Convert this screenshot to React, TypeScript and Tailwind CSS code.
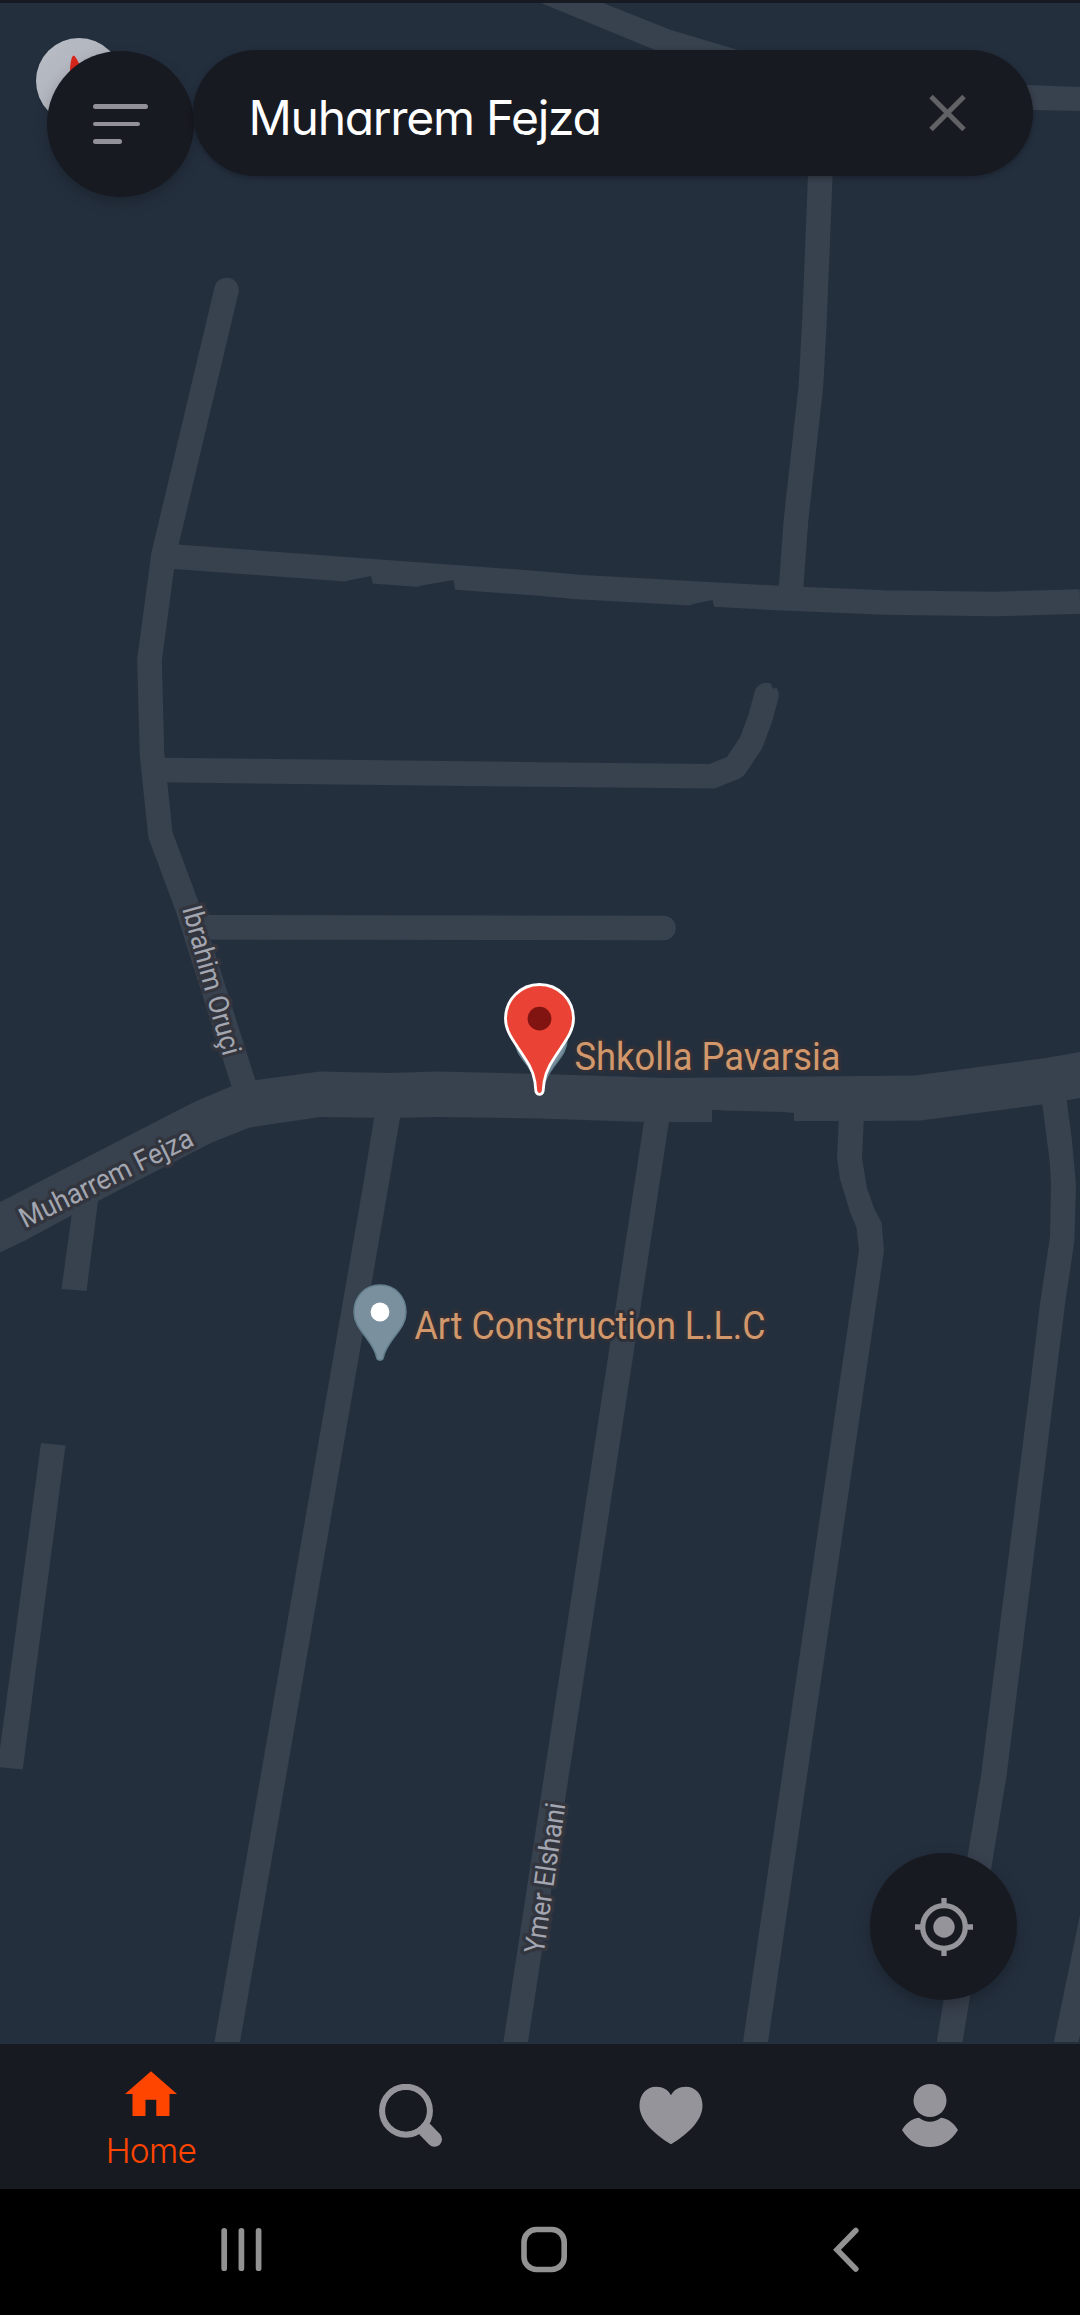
const pinPath =
  "M0-27C-15-27-26-15.500-26 0C-26 11-19.500 18-13.500 26C-7.500 34-4.500 39-3.300 45.500C-2.800 49 2.800 49 3.300 45.500C4.500 39 7.500 34 13.500 26C19.500 18 26 11 26 0C26-15.500 15-27 0-27Z";

function PlacePin({ x, y, hole }: { x: number; y: number; hole?: boolean }) {
  return (
    <g transform={`translate(${x} ${y})`}>
      <path d={pinPath} fill="#7b909e" stroke="#64808f" strokeWidth="1.500" />
      {hole && <circle r="9.400" fill="#fff" />}
    </g>
  );
}

function StreetMap() {
  return (
    <svg className="block h-full w-full" viewBox="0 3 1080 2041" preserveAspectRatio="none">
      <rect y="3" width="1080" height="2041" fill="#242f3e" />
      <g fill="#38414e">
        <path d="M541 3H603L671 30L738 50L760 58H675L655 50Z" />
        <path d="M1000 84L1027 85L1080 87V111L1034 110L1000 109Z" />
        <path d="M0 1202L194.600 1101.700L232 1086L256.500 1080L320 1071.400L389 1073L437 1071.400L540 1074L667 1078L915 1075.500L1046 1058L1080 1052V1098L1042 1104.500L920.500 1120.400L863.700 1121H794V1113L783 1112L721.500 1110.500V1110H712V1122H643L540 1118.500L437 1117L389 1118L320 1117L249.700 1127.400L212 1142.600L98 1201L26 1240L0 1252.400Z" />
        <path d="M73 1205L99 1195L98 1201L86.500 1291L61.500 1289Z" />
        <path d="M41 1443L65.500 1445.500L22.700 1769.500L-2.500 1767Z" />
        <path d="M375 1112L401 1112L389.500 1180L240 2042H214.500L364 1180Z" />
        <path d="M645 1115H670L528 2042H503.400Z" />
        <path d="M839 1115H864L862 1158L867 1188L874 1208L881.600 1222.500L884 1250.600L768 2042H743L859 1250.600L856.500 1227.500L850 1212L840 1179L837 1158Z" />
        <path d="M1041 1095H1066L1072 1141L1076 1185L1074.400 1241L1065 1304L1006.600 1775.600L962.500 2042H936.700L981 1775.600L1031 1379L1040 1304L1050 1237L1051 1182L1049.600 1160Z" />
        <path d="M1080 1915L1053.800 2042H1078.600L1080 2035Z" />
      </g>
      <g fill="none" stroke="#38414e" strokeWidth="24.600" strokeLinejoin="round">
        <path d="M226.500 290L163.500 555L149.500 660L152 755L160.500 835L188 909L244 1085" strokeLinecap="round" />
        <path d="M820.500 170L814.500 320L811 385L796 520L790.500 595" />
        <path d="M165 556L540 583.500L578 587L778 598L884 602.500L995 604L1080 601.500" />
        <path d="M160 770L540 774.500L712 776.300L735 767L751 743L760 719L766.500 695" strokeLinecap="round" />
        <path d="M196 927.300L663.500 928" strokeLinecap="round" />
      </g>
      <g fill="#242f3e">
        <path d="M346 581L371 576L373 584L346 584Z" />
        <path d="M419 586L453.500 580L455.500 591L419 589Z" />
        <path d="M691 604.500L712.500 600L714.500 608L691 607Z" />
        <path d="M771 680V684L773 689L776 687.500L782 690V680Z" />
      </g>

      <g
        fontFamily="Roboto, sans-serif"
        fontSize="28"
        fill="#a3a6b0"
        stroke="#32353d"
        strokeWidth="7"
        strokeLinejoin="round"
        paintOrder="stroke"
      >
        <text transform="translate(25 1228.500) rotate(-26.200)" textLength="190" lengthAdjust="spacingAndGlyphs">Muharrem Fejza</text>
        <text transform="translate(182 908.500) rotate(74.500)" textLength="154" lengthAdjust="spacingAndGlyphs">Ibrahim Oruçi</text>
        <text transform="translate(543.500 1954.500) rotate(-81.700)" textLength="152" lengthAdjust="spacingAndGlyphs">Ymer Elshani</text>
      </g>

      <PlacePin x={380} y={1312} hole />
      <PlacePin x={541} y={1039.500} />
      <g
        fontFamily="Roboto, sans-serif"
        fontSize="38"
        fill="#d2986b"
        stroke="#2f3037"
        strokeWidth="6"
        strokeLinejoin="round"
        paintOrder="stroke"
      >
        <text x="574.500" y="1070" textLength="266" lengthAdjust="spacingAndGlyphs">Shkolla Pavarsia</text>
        <text x="414.500" y="1339" textLength="351" lengthAdjust="spacingAndGlyphs">Art Construction L.L.C</text>
      </g>

      <g transform="translate(539.500 1018.700)">
        <path
          d="M0-34.200C-19-34.200-34-19-34 0C-34 11-28 19.500-21.500 29C-12 43-6.500 51-4.600 63C-4.200 67 -4 70-3.500 73C-2.500 76.500 2.500 76.500 3.500 73C4 70 4.200 67 4.600 63C6.500 51 12 43 21.500 29C28 19.500 34 11 34 0C34-19 19-34.200 0-34.200Z"
          fill="#ea4335"
          stroke="#fff"
          strokeWidth="2.800"
        />
        <circle r="11.900" fill="#811411" />
      </g>
    </svg>
  );
}

function Header() {
  return (
    <div className="absolute inset-x-0 top-0 flex items-start pt-[50px] pl-[47px]">
      <div className="absolute top-[38px] left-[36px] h-[86px] w-[86px] overflow-hidden rounded-full bg-gradient-to-br from-[#b9bdc5] to-[#a9acb4] shadow">
        <svg className="h-full w-full" viewBox="0 0 86 86">
          <path d="M34 34C34 26 35.500 18 37.500 17.500C40 18 42 24 46 31L40 44H34Z" fill="#d9261c" />
        </svg>
      </div>
      <button className="relative mt-px flex h-[146px] w-[147px] shrink-0 flex-col gap-[13px] rounded-full bg-[#181a21] pt-[53px] pl-[46px] shadow-[0_6px_14px_rgba(0,0,0,0.22)]">
        <span className="h-[4.700px] w-[55px] rounded-full bg-[#929197]" />
        <span className="h-[4.700px] w-[47px] rounded-full bg-[#929197]" />
        <span className="h-[4.700px] w-[29px] rounded-full bg-[#929197]" />
      </button>
      <div className="relative -ml-px flex h-[126px] w-[840px] items-center justify-between rounded-full bg-[#181a21] pr-[66px] pl-[55.500px] shadow-[0_2px_6px_rgba(0,0,0,0.3)]">
        <span className="pt-[10px] font-['Inter',sans-serif] text-[48px] leading-none font-normal tracking-[-1.300px] whitespace-nowrap text-white [font-feature-settings:'cv11']">
          Muharrem Fejza
        </span>
        <svg className="h-[40px] w-[40px]" viewBox="0 0 40 40" stroke="#606266" strokeWidth="5">
          <path d="M4 3.500L37 36.500M37 3.500L4 36.500" />
        </svg>
      </div>
    </div>
  );
}

function LocateButton() {
  return (
    <button className="absolute right-[63px] bottom-[44px] flex h-[147px] w-[147px] items-center justify-center rounded-full bg-[#181a21] shadow-[0_6px_16px_rgba(0,0,0,0.25)]">
      <svg className="h-[60px] w-[60px]" viewBox="-30 -30 60 60" fill="none" stroke="#95949a" strokeWidth="5.300">
        <circle r="21.300" />
        <circle r="10.700" fill="#95949a" stroke="none" />
        <path d="M0-29V-21M0 29V21M-29 0H-21M29 0H21" />
      </svg>
    </button>
  );
}

function TabBar() {
  return (
    <nav className="grid h-[145px] shrink-0 grid-cols-[302px_218px_301px_217px] bg-[#181a21]">
      <div className="flex flex-col items-center pt-[27px]">
        <svg className="h-[45px] w-[52px]" viewBox="0 0 52 45" fill="#ff4500">
          <path d="M26 .300L52 23H44.500V45H31.300V28.700H20.500V45H7.500V23H0Z" />
        </svg>
        <span className="mt-[15px] font-['Inter',sans-serif] text-[33.500px] leading-[40px] font-light tracking-[-0.700px] text-[#ff4500]">
          Home
        </span>
      </div>
      <div className="flex justify-center pt-[40px]">
        <svg className="h-[64px] w-[64px]" viewBox="0 0 64 64" fill="none" stroke="#95949a">
          <circle cx="27" cy="26.700" r="23.800" strokeWidth="6.300" />
          <path d="M46 45.500L55.500 55.300" strokeWidth="15" strokeLinecap="round" />
          <circle cx="27" cy="26.700" r="20.700" fill="#181a21" stroke="none" />
        </svg>
      </div>
      <div className="flex justify-center pt-[42px]">
        <svg className="h-[58px] w-[64px]" viewBox="0 0 64 58" fill="#95949a">
          <path d="M32 58.300C20 51 .500 37 .500 19.500C.500 8 8 .700 17 .700C24 .700 29.500 4 32 9.300C34.500 4 40 .700 47 .700C56 .700 63.500 8 63.500 19.500C63.500 37 44 51 32 58.300Z" />
        </svg>
      </div>
      <div className="flex justify-center pt-[40px]">
        <svg className="h-[64px] w-[58px]" viewBox="0 0 58 64" fill="#95949a">
          <circle cx="29" cy="16.500" r="16.500" />
          <path d="M18 33.800C25 39 33 39 40 33.800C48 34.500 54 41 57 46C50 57.500 40 63 29 63C18 63 8 57.500 1 46C4 41 10 34.500 18 33.800Z" />
        </svg>
      </div>
    </nav>
  );
}

function SystemBar() {
  return (
    <div className="flex h-[126px] shrink-0 items-start justify-between bg-black px-[218px] pt-[35px]">
      <svg className="h-[52px] w-[48px]" viewBox="0 0 48 52" stroke="#929292" strokeWidth="5.700" strokeLinecap="round">
        <path d="M6.200 6.800V44.200M23.400 6.800V44.200M40.600 6.800V44.200" />
      </svg>
      <svg className="mr-[9px] h-[52px] w-[52px]" viewBox="0 0 52 52" fill="none" stroke="#929292" strokeWidth="5.600">
        <rect x="6" y="5.500" width="40.200" height="40" rx="12.500" />
      </svg>
      <svg className="h-[52px] w-[32px]" viewBox="0 0 32 52" fill="none" stroke="#929292" strokeWidth="5.600" strokeLinecap="round">
        <path d="M25.800 6.500L7 25.700L25.800 45" />
      </svg>
    </div>
  );
}

export default function App() {
  return (
    <div className="flex h-[2315px] w-[1080px] flex-col overflow-hidden bg-black">
      <div className="relative h-[2044px] shrink-0 bg-[#181a21] pt-[3px]">
        <StreetMap />
        <Header />
        <LocateButton />
      </div>
      <TabBar />
      <SystemBar />
    </div>
  );
}
